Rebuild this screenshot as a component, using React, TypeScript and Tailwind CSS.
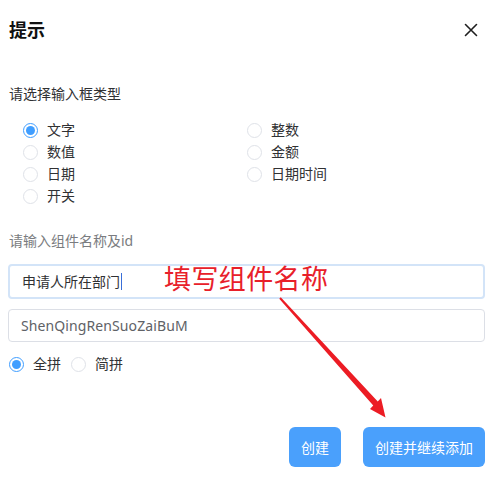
import React from "react";

const font = { fontFamily: '"Noto Sans", "Noto Sans CJK SC", sans-serif' };

function Radio({ checked, label }: { checked?: boolean; label: string }) {
  return (
    <div className="flex items-center h-[22px]">
      {checked ? (
        <span className="w-[15px] h-[15px] rounded-full border border-[#409eff] flex items-center justify-center">
          <span className="w-[9px] h-[9px] rounded-full bg-[#409eff]" />
        </span>
      ) : (
        <span className="w-[15px] h-[15px] rounded-full border border-[#dfe2e8]" />
      )}
      <span className="ml-[9px] text-[14px] text-[#303133] leading-[20px]">{label}</span>
    </div>
  );
}

export default function App() {
  return (
    <div className="relative w-[489px] h-[488px] bg-white overflow-hidden" style={font}>
      <div className="flex items-center justify-between h-[20px] mt-[20px] pl-[9px] pr-[10px]">
        <span className="text-[18px] font-bold text-[#111] leading-[20px]">提示</span>
        <svg width="14" height="14" viewBox="0 0 14 14" className="mr-[1px]">
          <path d="M1.5 1.5 L12.5 12.5 M12.5 1.5 L1.5 12.5" stroke="#1f1f1f" strokeWidth="1.6" strokeLinecap="round" />
        </svg>
      </div>

      <div className="mt-[44px] pl-[9px] text-[14px] leading-[20px] text-[#303133]">请选择输入框类型</div>

      <div className="mt-[15px] pl-[23px] grid grid-cols-[224px_1fr]">
        <Radio checked label="文字" />
        <Radio label="整数" />
        <Radio label="数值" />
        <Radio label="金额" />
        <Radio label="日期" />
        <Radio label="日期时间" />
        <Radio label="开关" />
      </div>

      <div className="mt-[24px] pl-[9px] text-[14px] leading-[20px] text-[#7a7c80]">请输入组件名称及id</div>

      <div className="mt-[13px] ml-[8px] mr-[4px] h-[35px] rounded-[4px] border-2 border-[#d3e4f8] flex items-center pl-[12px]">
        <span className="text-[14px] text-[#303133]">申请人所在部门</span>
        <span className="w-[1px] h-[17px] bg-[#3a6fd8] ml-[1px]" />
      </div>

      <div className="mt-[10px] ml-[8px] mr-[4px] h-[33px] rounded-[4px] border border-[#dcdfe6] flex items-center pl-[12px]">
        <span className="text-[14px] text-[#606266] tracking-[0.1px]">ShenQingRenSuoZaiBuM</span>
      </div>

      <div className="mt-[11px] pl-[9px] flex items-center gap-[10px]">
        <Radio checked label="全拼" />
        <Radio label="简拼" />
      </div>

      <div className="mt-[52px] pr-[4px] flex justify-end gap-[22px]">
        <button className="w-[52px] h-[40px] rounded-[6px] bg-[#4aa0fc] text-white text-[14px]">创建</button>
        <button className="w-[122px] h-[40px] rounded-[6px] bg-[#4aa0fc] text-white text-[14px]">创建并继续添加</button>
      </div>

      <div className="absolute left-[164px] top-[261px] text-[27px] leading-[36px] text-[#e8202a] tracking-[0.4px]">填写组件名称</div>

      <svg className="absolute left-0 top-0 pointer-events-none" width="489" height="488" viewBox="0 0 489 488">
        <polygon
          points="279.25,298.7 280.75,297.3 377.75,401.5 381,398 385.5,417.5 370,409 373.25,405.5"
          fill="#ec1c24"
        />
      </svg>
    </div>
  );
}
